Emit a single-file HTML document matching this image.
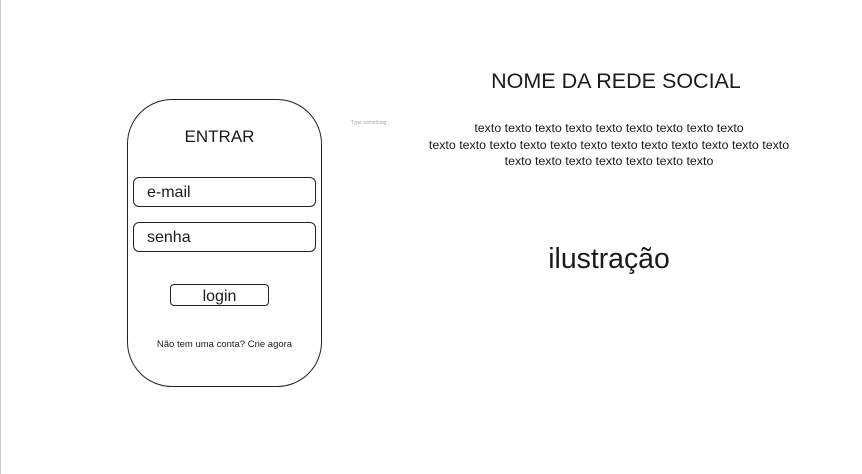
<!DOCTYPE html>
<html><head><meta charset="utf-8"><style>
body{margin:0;width:862px;height:474px;background:#fff;position:relative;overflow:hidden;font-family:"Liberation Sans","DejaVu Sans",sans-serif;color:#1a1a1a}
.a{position:absolute}
.box{border:1.5px solid #222;box-sizing:border-box}
.t{position:absolute;white-space:nowrap}
</style></head><body>
<div class="a" style="left:0;top:0;width:1px;height:474px;background:#ccc"></div>
<div class="a box" style="left:127px;top:99px;width:195px;height:288px;border-radius:45px"></div>
<div class="t" style="left:127px;width:185px;text-align:center;top:127px;font-size:17px">ENTRAR</div>
<div class="a box" style="left:133px;top:177px;width:183px;height:30px;border-radius:6px"></div>
<div class="t" style="left:147px;top:184px;font-size:16px">e-mail</div>
<div class="a box" style="left:133px;top:222px;width:183px;height:30px;border-radius:6px"></div>
<div class="t" style="left:147px;top:229px;font-size:16px">senha</div>
<div class="a box" style="left:170px;top:284px;width:99px;height:22px;border-radius:4px"></div>
<div class="t" style="left:170px;width:99px;text-align:center;top:288px;font-size:16px">login</div>
<div class="t" style="left:127px;width:195px;text-align:center;top:339px;font-size:9.5px">Não tem uma conta? Crie agora</div>
<div class="t" style="left:351px;top:120px;font-size:5px;color:#aaa">Type something</div>
<div class="t" style="left:400px;width:432px;text-align:center;top:69px;font-size:21.5px">NOME DA REDE SOCIAL</div>
<div class="t" style="left:379px;width:460px;text-align:center;top:120px;font-size:12.4px;line-height:16.5px;white-space:normal">texto texto texto texto texto texto texto texto texto<br>texto texto texto texto texto texto texto texto texto texto texto texto<br>texto texto texto texto texto texto texto</div>
<div class="t" style="left:400px;width:418px;text-align:center;top:243px;font-size:28.4px">ilustração</div>
</body></html>
